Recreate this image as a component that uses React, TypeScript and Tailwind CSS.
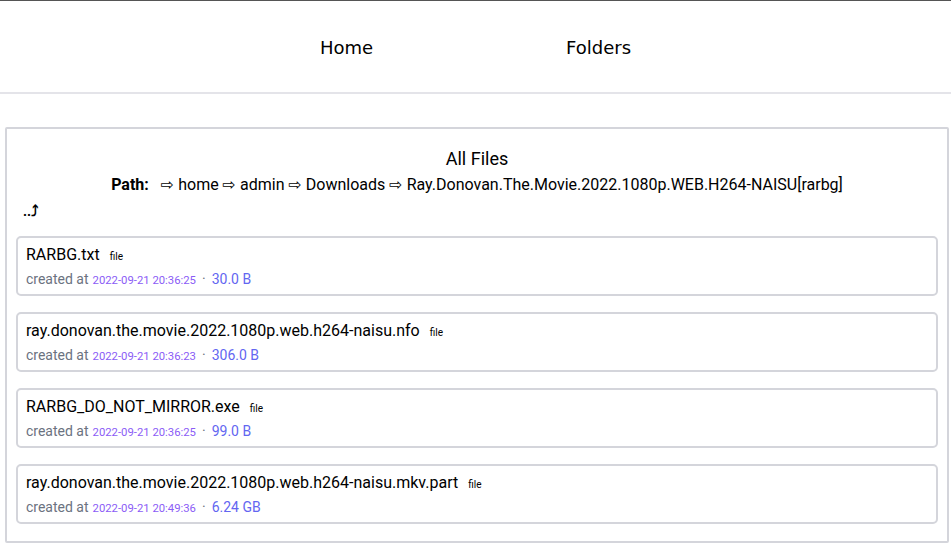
import React from "react";

const files = [
  { name: "RARBG.txt", date: "2022-09-21 20:36:25", size: "30.0 B" },
  { name: "ray.donovan.the.movie.2022.1080p.web.h264-naisu.nfo", date: "2022-09-21 20:36:23", size: "306.0 B" },
  { name: "RARBG_DO_NOT_MIRROR.exe", date: "2022-09-21 20:36:25", size: "99.0 B" },
  { name: "ray.donovan.the.movie.2022.1080p.web.h264-naisu.mkv.part", date: "2022-09-21 20:49:36", size: "6.24 GB" },
];

export default function App() {
  return (
    <div className="min-h-[558px] bg-white text-black border-t border-[#555555]" style={{ fontFamily: "Roboto, 'Noto Sans', sans-serif" }}>
      <header className="h-[93px] border-b-2 border-[#e4e4e9] flex items-center justify-center gap-[193px] text-[18px] font-['DejaVu_Sans',sans-serif] pt-[2px]">
        <span>Home</span>
        <span>Folders</span>
      </header>
      <main className="mt-[33px] ml-[5px] mr-[2px] border-2 border-[#d4d5db] rounded-[2px] px-[9px] pt-[19px] pb-[1px]">
        <div className="text-center text-[18px] leading-[22px]">All Files</div>
        <div className="text-center text-[16px] leading-[26px] mt-[2px]">
          <span className="font-bold mr-[12px]">Path:</span>
          <span className="font-['DejaVu_Sans',sans-serif]">⇨</span> home <span className="font-['DejaVu_Sans',sans-serif]">⇨</span> admin <span className="font-['DejaVu_Sans',sans-serif]">⇨</span> Downloads <span className="font-['DejaVu_Sans',sans-serif]">⇨</span> Ray.Donovan.The.Movie.2022.1080p.WEB.H264-NAISU[rarbg]
        </div>
        <div className="pl-[7px] text-[14px] font-bold leading-[24px] h-[24px] mt-[1px]">..<span className="font-['DejaVu_Sans',sans-serif] text-[15px]">⤴</span></div>
        <div className="mt-[13px] flex flex-col">
          {files.map((f) => (
            <div key={f.name} className="mb-[16px] h-[60px] border-2 border-[#d4d5db] rounded-[5px] px-[8px] pt-[6px]">
              <div className="flex items-baseline text-[16px] leading-[22px]">
                <span>{f.name}</span>
                <span className="ml-[10px] text-[10px]">file</span>
              </div>
              <div className="mt-[1px] text-[14px] leading-[20px] text-[#6b7280] flex items-baseline">
                <span>created at</span>
                <span className="ml-[4px] text-[11.3px] text-[#8b5cf6]">{f.date}</span>
                <span className="mx-[6px]">·</span>
                <span className="text-[#6366f1]">{f.size}</span>
              </div>
            </div>
          ))}
        </div>
      </main>
    </div>
  );
}
